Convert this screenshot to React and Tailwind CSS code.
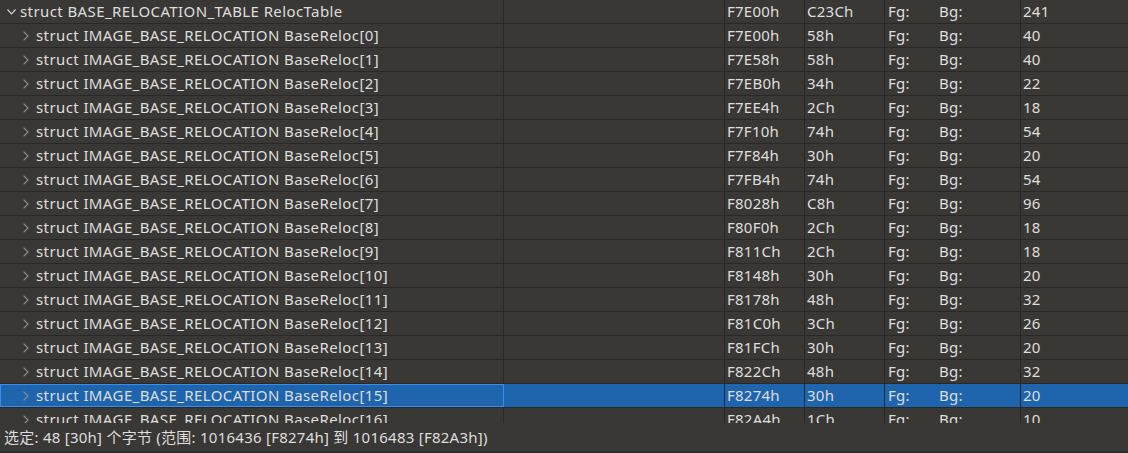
import React from "react";

const rows = [
  ["F7E00h", "58h", "40"],
  ["F7E58h", "58h", "40"],
  ["F7EB0h", "34h", "22"],
  ["F7EE4h", "2Ch", "18"],
  ["F7F10h", "74h", "54"],
  ["F7F84h", "30h", "20"],
  ["F7FB4h", "74h", "54"],
  ["F8028h", "C8h", "96"],
  ["F80F0h", "2Ch", "18"],
  ["F811Ch", "2Ch", "18"],
  ["F8148h", "30h", "20"],
  ["F8178h", "48h", "32"],
  ["F81C0h", "3Ch", "26"],
  ["F81FCh", "30h", "20"],
  ["F822Ch", "48h", "32"],
  ["F8274h", "30h", "20"],
  ["F82A4h", "1Ch", "10"],
];

function Chevron({ down }) {
  return down ? (
    <svg width="9" height="6" viewBox="0 0 9 6" className="shrink-0">
      <path d="M0.5 0.5 L4.5 4.8 L8.5 0.5" fill="none" stroke="#d0d0d0" strokeWidth="1.2" />
    </svg>
  ) : (
    <svg width="6" height="10" viewBox="0 0 6 10" className="shrink-0">
      <path d="M0.6 0.6 L5 5 L0.6 9.4" fill="none" stroke="#8c8c8c" strokeWidth="1.2" />
    </svg>
  );
}

function Row({ name, cols, selected, root }) {
  const bg = selected ? "bg-[#1f65ae]" : "";
  return (
    <div className={`flex h-6 shrink-0 border-b border-[#2a2927] ${bg}`}>
      <div
        className={`flex w-[504px] shrink-0 items-center border-r border-[#2a2927] ${
          selected ? "outline outline-1 -outline-offset-1 outline-[#3b8ee6]" : ""
        }`}
      >
        <div className={`flex items-center ${root ? "w-[20px] pl-[7px]" : "w-[36px] pl-[23px]"}`}>
          <Chevron down={root} />
        </div>
        <span className="whitespace-nowrap tracking-[0.4px]">{name}</span>
      </div>
      <div className="w-[221px] shrink-0 border-r border-[#2a2927]" />
      <div className="flex w-[80px] shrink-0 items-center border-r border-[#2a2927] pl-[2px]">{cols[0]}</div>
      <div className="flex w-[80px] shrink-0 items-center border-r border-[#2a2927] pl-[2px]">{cols[1]}</div>
      <div className="flex w-[136px] shrink-0 items-center border-r border-[#2a2927] pl-[3px]">
        <span className="w-[51px]">Fg:</span>
        <span>Bg:</span>
      </div>
      <div className="flex flex-1 items-center pl-[2px]">{cols[2]}</div>
    </div>
  );
}

export default function App() {
  return (
    <div
      className="flex h-[453px] w-[1128px] flex-col overflow-hidden bg-[#3a3835] text-[15px] tracking-[0.25px] text-[#dedede]"
      style={{ fontFamily: '"Noto Sans", "Noto Sans CJK SC", sans-serif' }}
    >
      <div className="flex h-[423px] shrink-0 flex-col overflow-hidden">
        <Row name="struct BASE_RELOCATION_TABLE RelocTable" root cols={["F7E00h", "C23Ch", "241"]} />
        {rows.map((r, i) => (
          <Row
            key={i}
            name={`struct IMAGE_BASE_RELOCATION BaseReloc[${i}]`}
            cols={r}
            selected={i === 15}
          />
        ))}
      </div>
      <div className="flex h-[28px] shrink-0 items-center pl-[4px]">
        选定: 48 [30h] 个字节 (范围: 1016436 [F8274h] 到 1016483 [F82A3h])
      </div>
      <div className="h-[2px] bg-[#2b2b2b]" />
    </div>
  );
}
